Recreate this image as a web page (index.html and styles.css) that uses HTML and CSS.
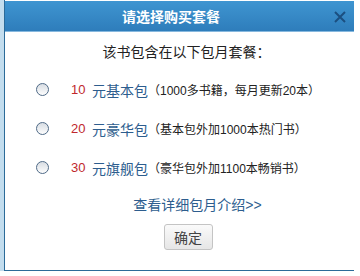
FILE: index.html
```html
<!DOCTYPE html>
<html>
    <head>
        <meta charset="utf-8">
        <link rel="stylesheet" href="styles.css">
    </head>

    <body>
        <div class="frame">
            <div class="dialog">
                <div class="header">
                    <span class="title">请选择购买套餐</span>
                    <span class="close">
                        <svg width="12" height="12" viewBox="0 0 12 12">
                            <path d="M1 1 L11 11 M11 1 L1 11" stroke="#1b4f80" stroke-width="2"/>
                        </svg>
                    </span>
                </div>

                <div class="intro">该书包含在以下包月套餐：</div>

                <div class="plans">
                    <label class="plan">
                        <span class="radio"></span>
                        <span class="price">10</span>
                        <span class="name">元基本包</span>
                        <span class="desc">（1000多书籍，每月更新20本）</span>
                    </label>
                    <label class="plan">
                        <span class="radio"></span>
                        <span class="price">20</span>
                        <span class="name">元豪华包</span>
                        <span class="desc">（基本包外加1000本热门书）</span>
                    </label>
                    <label class="plan">
                        <span class="radio"></span>
                        <span class="price">30</span>
                        <span class="name">元旗舰包</span>
                        <span class="desc">（豪华包外加1100本畅销书）</span>
                    </label>
                </div>

                <div class="more"><a href="#">查看详细包月介绍&gt;&gt;</a></div>

                <div class="actions">
                    <button>确定</button>
                </div>
            </div>
        </div>
    </body>
</html>
```

FILE: styles.css
```css
body {
    margin: 0;
    background: #fff;
    font-family: "Liberation Sans", "Noto Sans CJK SC", sans-serif;
    color: #333;
}

.frame {
    border-left: 4px solid #c3ddee;
    width: 350px;
}

.dialog {
    border-left: 1px solid #2c6b99;
    border-bottom: 1px solid #2c6b99;
    height: 271px;
    box-sizing: border-box;
    padding-top: 1px;
}

.header {
    display: flex;
    align-items: center;
    justify-content: center;
    position: relative;
    height: 30px;
    padding-right: 17px;
    background: linear-gradient(#3f95d1, #2e7dbb);
    border-bottom: 1px solid #86b8de;
}

.title {
    color: #fff;
    font-size: 14px;
    font-weight: bold;
}

.close {
    position: absolute;
    right: 8px;
    top: 10px;
    line-height: 0;
}

.intro {
    text-align: center;
    font-size: 14px;
    margin-top: 9px;
    padding-left: 14px;
    color: #222;
}

.plans {
    margin-top: 9px;
    padding-left: 31px;
}

.plan {
    display: flex;
    align-items: center;
    height: 39px;
}

.radio {
    width: 11px;
    height: 11px;
    border: 1px solid #4f6a87;
    border-radius: 50%;
    background: linear-gradient(#d8dde3, #fdfdfd);
    margin-right: 22px;
}

.price {
    color: #c0272d;
    font-size: 13px;
    margin-right: 7px;
    width: 14px;
}

.name {
    color: #2d5d8e;
    font-size: 14px;
}

.desc {
    font-size: 12px;
    color: #222;
}

.more {
    text-align: center;
    margin-top: 7px;
    padding-left: 36px;
    font-size: 14px;
}

.more a {
    color: #2d5d8e;
    text-decoration: none;
}

.actions {
    text-align: center;
    margin-top: 10px;
    padding-left: 17px;
}

button {
    width: 49px;
    height: 26px;
    font-family: "Liberation Sans", "Noto Sans CJK SC", sans-serif;
    font-size: 14px;
    color: #444;
    background: linear-gradient(#fafafa, #e6e6e6);
    border: 1px solid #c4c4c4;
    border-radius: 3px;
    padding: 0;
}
```
